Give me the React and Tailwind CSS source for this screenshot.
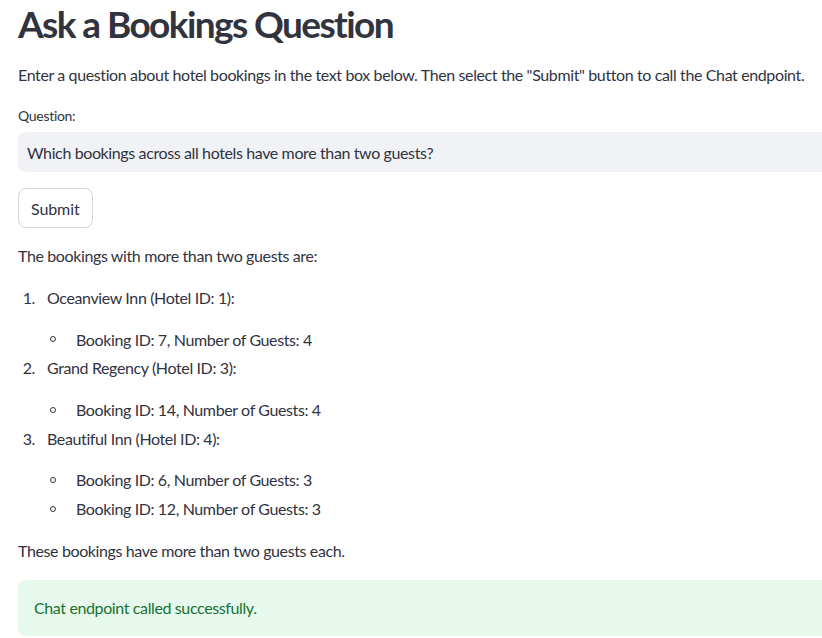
import React from 'react';

const font = "font-['Lato','Noto_Sans',sans-serif]";

function Bullet({ children, first }) {
  return (
    <li className={`flex items-center h-[25.6px] ${first ? '' : 'mt-[3.2px]'}`}>
      <span className="w-[58px] flex justify-end pr-[20px]">
        <span className="w-[6px] h-[6px] rounded-full border border-[#31333f]" />
      </span>
      <span>{children}</span>
    </li>
  );
}

function Item({ n, title, bookings, first }) {
  return (
    <li className={first ? '' : 'mt-[3.2px]'}>
      <div className="flex items-center h-[25.6px] mb-4">
        <span className="w-[29px] text-right pr-[12px] pl-[4px]">{n}.</span>
        <span>{title}</span>
      </div>
      <ul>
        {bookings.map((b, i) => (
          <Bullet key={b} first={i === 0}>{b}</Bullet>
        ))}
      </ul>
    </li>
  );
}

export default function App() {
  const items = [
    { title: 'Oceanview Inn (Hotel ID: 1):', bookings: ['Booking ID: 7, Number of Guests: 4'] },
    { title: 'Grand Regency (Hotel ID: 3):', bookings: ['Booking ID: 14, Number of Guests: 4'] },
    {
      title: 'Beautiful Inn (Hotel ID: 4):',
      bookings: ['Booking ID: 6, Number of Guests: 3', 'Booking ID: 12, Number of Guests: 3'],
    },
  ];

  return (
    <div className={`w-[822px] h-[638px] overflow-hidden bg-white text-[#31333f] ${font}`}>
      <div className="w-[900px] pl-[18px] text-[16px] leading-[1.6] tracking-[-0.38px]">
        <h1 className="text-[37px] font-bold leading-[1.2] pt-[2px] mb-[16px] tracking-[-1.6px]">
          Ask a Bookings Question
        </h1>

        <p className="mb-[17px]">
          Enter a question about hotel bookings in the text box below. Then select the "Submit" button to call the Chat endpoint.
        </p>

        <label className="block text-[14px] leading-[1.6] mb-[5px] tracking-[-0.3px]">Question:</label>
        <div className="h-[40px] bg-[#f0f2f6] rounded-[8px] flex items-center pl-[9px] mb-[16px]">
          Which bookings across all hotels have more than two guests?
        </div>

        <button className="h-[40px] px-[12px] border border-[#d6d6d9] rounded-[8px] bg-white mb-[15px] tracking-[-0.1px]">
          Submit
        </button>

        <p className="h-[25.6px] mb-[16px]">The bookings with more than two guests are:</p>

        <ol className="mb-[16px]">
          {items.map((it, i) => (
            <Item key={it.title} n={i + 1} first={i === 0} title={it.title} bookings={it.bookings} />
          ))}
        </ol>

        <p className="h-[25.6px] mb-[17px]">These bookings have more than two guests each.</p>

        <div className="h-[56px] bg-[#e7f8ec] rounded-[8px] flex items-center pl-[16px] text-[#177233]">
          Chat endpoint called successfully.
        </div>
      </div>
    </div>
  );
}
